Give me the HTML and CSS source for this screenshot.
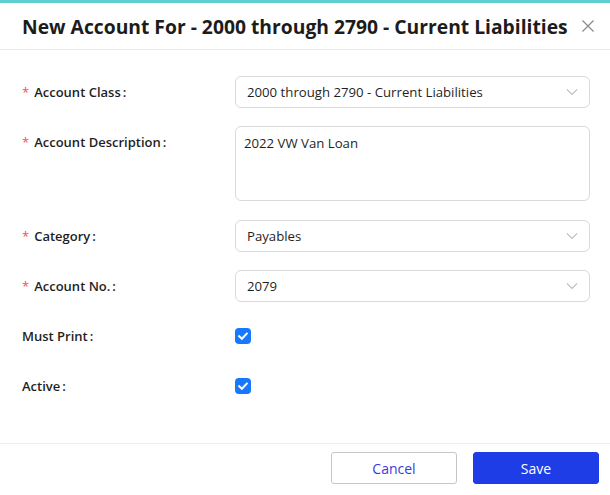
FILE: index.html
```html
<!DOCTYPE html>
<html>
<head>
<meta charset="utf-8">
<link rel="stylesheet" href="styles.css">
</head>
<body>
<div class="modal">
  <div class="modal-header">
    <div class="modal-title">New Account For - 2000 through 2790 - Current Liabilities</div>
    <span class="close">
      <svg width="14" height="14" viewBox="0 0 14 14"><path d="M1.5 1.5 L12.5 12.5 M12.5 1.5 L1.5 12.5" stroke="#8c8c8c" stroke-width="1.3" fill="none"/></svg>
    </span>
  </div>
  <div class="modal-body">
    <div class="form-row">
      <label class="form-label"><span class="req">*</span>Account Class</label>
      <div class="control">
        <div class="select"><span class="select-value">2000 through 2790 - Current Liabilities</span>
          <svg class="chev" width="12" height="8" viewBox="0 0 12 8"><path d="M1 1.5 L6 6.5 L11 1.5" stroke="#bfbfbf" stroke-width="1.1" fill="none"/></svg>
        </div>
      </div>
    </div>
    <div class="form-row tall">
      <label class="form-label"><span class="req">*</span>Account Description</label>
      <div class="control">
        <div class="textarea">2022 VW Van Loan</div>
      </div>
    </div>
    <div class="form-row">
      <label class="form-label"><span class="req">*</span>Category</label>
      <div class="control">
        <div class="select"><span class="select-value">Payables</span>
          <svg class="chev" width="12" height="8" viewBox="0 0 12 8"><path d="M1 1.5 L6 6.5 L11 1.5" stroke="#bfbfbf" stroke-width="1.1" fill="none"/></svg>
        </div>
      </div>
    </div>
    <div class="form-row">
      <label class="form-label"><span class="req">*</span>Account No.</label>
      <div class="control">
        <div class="select"><span class="select-value">2079</span>
          <svg class="chev" width="12" height="8" viewBox="0 0 12 8"><path d="M1 1.5 L6 6.5 L11 1.5" stroke="#bfbfbf" stroke-width="1.1" fill="none"/></svg>
        </div>
      </div>
    </div>
    <div class="form-row">
      <label class="form-label">Must Print</label>
      <div class="control">
        <span class="checkbox"><svg width="16" height="16" viewBox="0 0 16 16"><path d="M4.2 8.2 L6.9 10.8 L11.8 5.6" stroke="#fff" stroke-width="2" fill="none" stroke-linecap="square"/></svg></span>
      </div>
    </div>
    <div class="form-row">
      <label class="form-label">Active</label>
      <div class="control">
        <span class="checkbox"><svg width="16" height="16" viewBox="0 0 16 16"><path d="M4.2 8.2 L6.9 10.8 L11.8 5.6" stroke="#fff" stroke-width="2" fill="none" stroke-linecap="square"/></svg></span>
      </div>
    </div>
  </div>
  <div class="modal-footer">
    <button class="btn btn-default">Cancel</button>
    <button class="btn btn-primary">Save</button>
  </div>
</div>
</body>
</html>
```
FILE: styles.css
```css
* { box-sizing: border-box; }
html, body { margin: 0; padding: 0; background: #fff; }
body {
  font-family: "Open Sans", "Noto Sans", sans-serif;
  color: #1f1f1f;
  width: 610px;
  height: 495px;
  overflow: hidden;
}
.modal {
  border-top: 3px solid #5fcfcf;
  background: #fff;
}
.modal-header {
  height: 47px;
  display: flex;
  align-items: center;
  justify-content: space-between;
  padding: 0 15px 0 22px;
  border-bottom: 1px solid #e8e8e8;
}
.modal-title {
  font-size: 19.3px;
  font-weight: 700;
  color: #1c1c1c;
}
.close { display: flex; align-items: center; width: 14px; height: 14px; }
.modal-body {
  padding: 26px 20px 41px 22px;
  display: flex;
  flex-direction: column;
  gap: 18px;
}
.form-row {
  display: flex;
  align-items: center;
  min-height: 32px;
}
.form-row.tall { align-items: flex-start; margin-bottom: 1px; }
.form-row.tall .form-label { height: 32px; }
.form-label {
  width: 213px;
  flex: none;
  display: flex;
  align-items: center;
  font-size: 13px;
  font-weight: 600;
  color: #1f1f1f;
}
.form-label::after { content: ":"; margin-left: 2px; }
.req {
  color: #ff4d4f;
  font-size: 13px;
  margin-right: 5px;
  font-weight: 400;
}
.control { flex: 1; display: flex; align-items: center; }
.select {
  width: 100%;
  height: 32px;
  border: 1px solid #d9d9d9;
  border-radius: 6px;
  display: flex;
  align-items: center;
  justify-content: space-between;
  padding: 0 11px 0 11px;
  font-size: 13.2px;
  color: #1f1f1f;
}
.chev { flex: none; }
.textarea {
  width: 100%;
  height: 75px;
  border: 1px solid #d9d9d9;
  border-radius: 6px;
  padding: 6px 8px;
  font-size: 13.2px;
  line-height: 20px;
}
.checkbox {
  width: 16px;
  height: 16px;
  background: #1677ff;
  border-radius: 4px;
  display: block;
}
.checkbox svg { display: block; }
.modal-footer {
  border-top: 1px solid #ececec;
  display: flex;
  justify-content: flex-end;
  gap: 16px;
  padding: 8px 11px 0 0;
}
.btn {
  width: 126px;
  height: 32px;
  border-radius: 3px;
  font-family: "Open Sans", "Noto Sans", sans-serif;
  font-size: 14px;
  cursor: pointer;
}
.btn-default {
  background: #fff;
  border: 1px solid #c6c6c6;
  color: #3a3ad8;
}
.btn-primary {
  background: #1f3de6;
  border: 1px solid #1f3de6;
  color: #fff;
}
```
